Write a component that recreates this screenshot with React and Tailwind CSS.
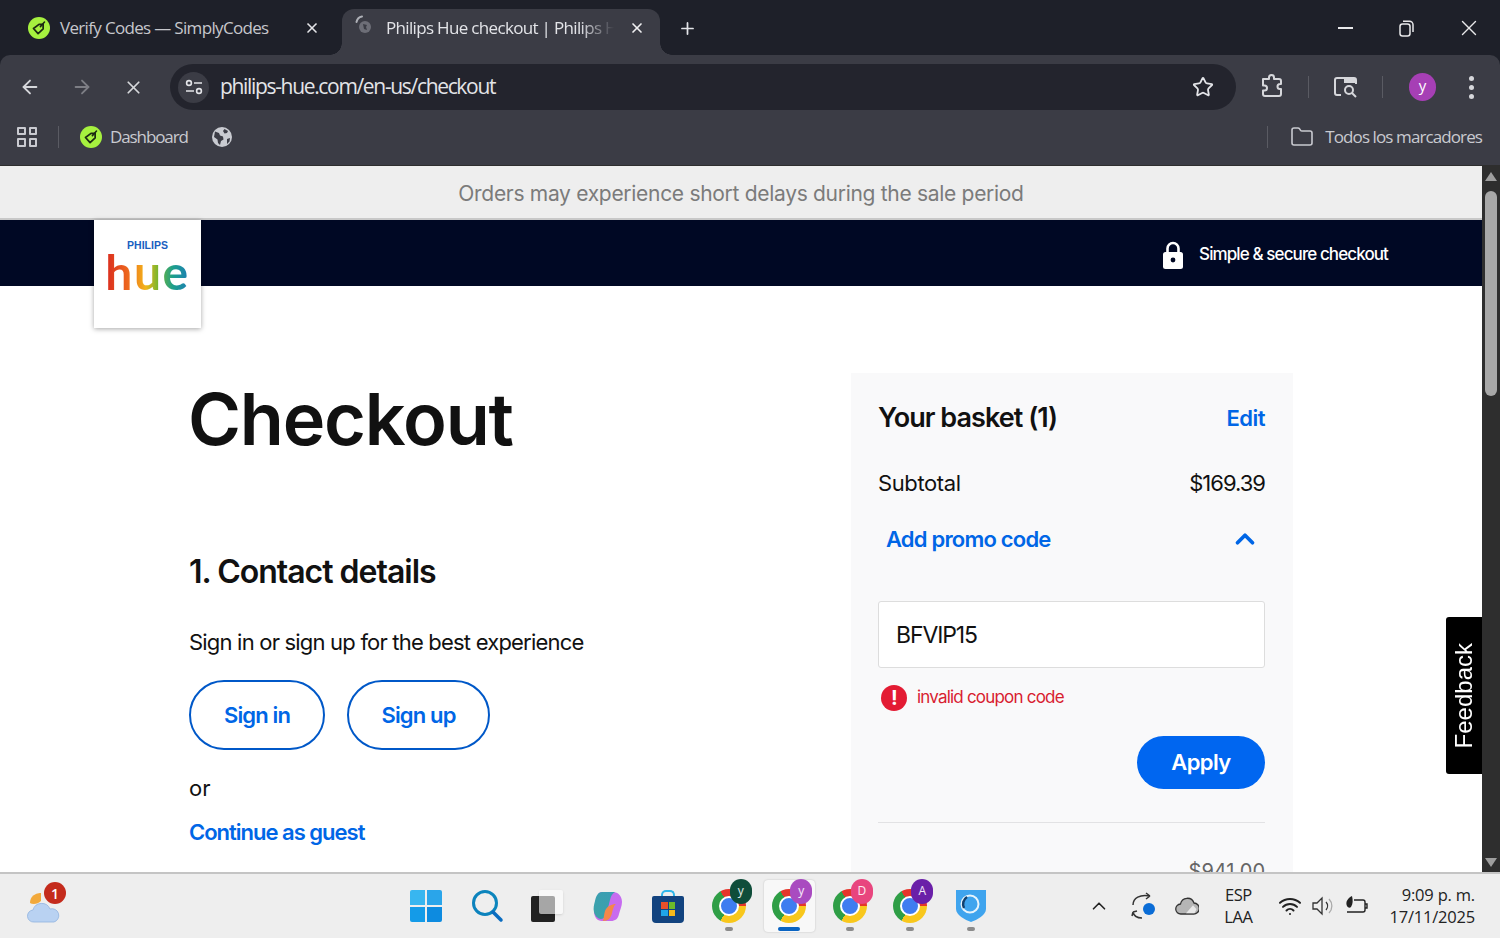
import React from 'react';
import { ArrowLeft, ArrowRight, X, Plus, Star, Folder, ChevronUp, Wifi } from 'lucide-react';

const sans = "font-['Inter','Liberation_Sans',sans-serif]";
const ui = "font-['Open_Sans','Noto_Sans',sans-serif]";

// green price tag favicon of SimplyCodes
const CodesIcon = ({ size = 22 }) => (
  <svg width={size} height={size} viewBox="0 0 24 24" className="shrink-0">
    <circle cx="12" cy="12" r="12" fill="#a6f13f" />
    <path d="M6 12.500l6-4.500h4.500v5L11 18.200 6 12.500z" fill="none" stroke="#1c2a12" strokeWidth="1.900" strokeLinejoin="round" />
    <path d="M13.500 10.500L18 5.500" stroke="#1c2a12" strokeWidth="1.700" strokeLinecap="round" />
  </svg>
);

const Globe = () => (
  <svg width="20" height="20" viewBox="0 0 20 20">
    <circle cx="10" cy="10" r="10" fill="#c9cbd1" />
    <path d="M3 4.500l4 1.500 1 2.500 3 1 .5 3-2.500 1.500-1 4-2-2-.5-3.500L2 10zM12.500 2l3.500 2-1 2-2.500.5-1.500-2.500zM15 12l3-1-.5 3.500L15 17z" fill="#3b3c45" />
  </svg>
);

const TuneIcon = () => (
  <svg width="18" height="16" viewBox="0 0 18 16" fill="none" stroke="#e3e4e8" strokeWidth="1.600">
    <circle cx="4" cy="4" r="2.400" />
    <path d="M9 4h8M1 12h8" />
    <circle cx="14" cy="12" r="2.400" />
  </svg>
);

const ExtensionIcon = () => (
  <svg width="24" height="26" viewBox="0 0 24 26" fill="none" stroke="#d6d7db" strokeWidth="2" strokeLinejoin="round">
    <path d="M3 6h6V4.500a2.500 2.500 0 0 1 5 0V6h5a2 2 0 0 1 2 2v3h-1a2.500 2.500 0 0 0 0 5h1v5a2 2 0 0 1-2 2H5a2 2 0 0 1-2-2v-3.500h1.500a2.500 2.500 0 0 0 0-5H3z" />
  </svg>
);

const TabSearchIcon = () => (
  <svg width="26" height="24" viewBox="0 0 26 24" fill="none" stroke="#d6d7db" strokeWidth="2">
    <path d="M8 20H4a2 2 0 0 1-2-2V5a2 2 0 0 1 2-2h17a2 2 0 0 1 2 2v4" />
    <path d="M11 3h12v5H11z" fill="#d6d7db" stroke="none" />
    <circle cx="16" cy="15" r="4" />
    <path d="M19 18l4 4" />
  </svg>
);

const RestoreIcon = () => (
  <svg width="15" height="17" viewBox="0 0 15 17" fill="none" stroke="#e8e8ea" strokeWidth="1.500">
    <rect x="1" y="4" width="10" height="12" rx="2.500" />
    <path d="M4 1.200h6.500a3.500 3.500 0 0 1 3.500 3.500V12" />
  </svg>
);

const Spinner = () => (
  <svg width="20" height="20" viewBox="0 0 20 20" className="shrink-0 -mt-[6px] -ml-[8px]">
    <circle cx="11" cy="12" r="6" fill="#6d6e77" />
    <path d="M2.500 7A7 7 0 0 1 8 1.500" fill="none" stroke="#aeb0b6" strokeWidth="2" strokeLinecap="round" />
    <path d="M9 9l4 1-1 2 1 3-3-1z" fill="#3b3c45" />
  </svg>
);

const Chrome = ({ letter, badge }) => (
  <span className="relative flex w-[34px] h-[34px] items-center justify-center rounded-full bg-[conic-gradient(from_-30deg,#e5352b_0_120deg,#f8c71c_120deg_240deg,#2f9e46_240deg_360deg)]">
    <span className="w-[16px] h-[16px] rounded-full bg-[#3f7df0] border-[2px] border-white box-content" />
    {letter && (
      <span className={`absolute -top-[10px] -right-[6px] w-[22px] h-[25px] rounded-full flex items-center justify-center text-[12px] text-white/90 ${ui} ${badge}`}>
        {letter}
      </span>
    )}
  </span>
);

const Dot = ({ className = 'w-[8px] bg-[#8b8b8b]' }) => <span className={`block h-[4px] rounded-full mt-[5px] ${className}`} />;

const WinLogo = () => (
  <span className="grid grid-cols-2 gap-[2px] w-[32px] h-[32px]">
    <span className="bg-[#38b6f0] rounded-tl-[2px]" />
    <span className="bg-[#2aa5ea] rounded-tr-[2px]" />
    <span className="bg-[#149be8] rounded-bl-[2px]" />
    <span className="bg-[#0d8be0] rounded-br-[2px]" />
  </span>
);

const SearchIcon = () => (
  <svg width="34" height="34" viewBox="0 0 34 34" fill="none">
    <circle cx="15" cy="14" r="11.500" stroke="url(#searchRing)" strokeWidth="3" />
    <path d="M23 23l8 8" stroke="#0a6cc0" strokeWidth="3.500" strokeLinecap="round" />
    <defs>
      <linearGradient id="searchRing" x1="4" y1="20" x2="26" y2="6">
        <stop stopColor="#0a6cc0" />
        <stop offset="0.7" stopColor="#0ea5b8" />
        <stop offset="1" stopColor="#7fe0b0" />
      </linearGradient>
    </defs>
  </svg>
);

const TaskView = () => (
  <span className="relative block w-[32px] h-[32px]">
    <span className="absolute left-0 bottom-0 w-[24px] h-[26px] rounded-[2px] bg-[#222]" />
    <span className="absolute right-0 top-0 w-[24px] h-[24px] rounded-[2px] bg-white/60 shadow-sm" />
  </span>
);

const Copilot = () => (
  <svg width="34" height="34" viewBox="0 0 34 34" fill="none">
    <path d="M10 3h12c5 0 9 4 9 10 0 4-2 8-3 12-1 5-4 7-8 7H11C6 32 3 28 3 22c0-4 2-8 3-12 1-4 2-7 4-7z" fill="url(#copB)" />
    <path d="M11 3c-4 0-6 4-7 9-1 4-2 7-1 11 1 4 4 7 7 7 3 0 5-3 6-7l3-12c1-4 2-6 5-8z" fill="url(#copA)" />
    <path d="M14 22c2-5 7-7 11-7-2 1-3 5-4 9-1 5-4 8-9 8 1-4 1-7 2-10z" fill="#f5874a" />
    <defs>
      <linearGradient id="copA" x1="4" y1="28" x2="20" y2="4">
        <stop stopColor="#e8c31e" />
        <stop offset="0.45" stopColor="#4cc46c" />
        <stop offset="1" stopColor="#2a7cf0" />
      </linearGradient>
      <linearGradient id="copB" x1="30" y1="6" x2="14" y2="30">
        <stop stopColor="#5a9cf0" />
        <stop offset="0.4" stopColor="#c86bf0" />
        <stop offset="1" stopColor="#f0647e" />
      </linearGradient>
    </defs>
  </svg>
);

const Store = () => (
  <span className="relative block w-[32px] h-[33px] mt-[1px]">
    <span className="absolute left-[9px] top-0 w-[14px] h-[10px] rounded-t-[5px] border-[2px] border-b-0 border-[#2fb6ea]" />
    <span className="absolute inset-x-0 bottom-0 h-[27px] rounded-b-[4px] rounded-t-[2px] bg-[#12437f] flex items-center justify-center">
      <span className="grid grid-cols-2 gap-[1px] w-[14px] h-[14px]">
        <span className="bg-[#e8502a]" />
        <span className="bg-[#6cbb2a]" />
        <span className="bg-[#1fa5e8]" />
        <span className="bg-[#f5b81a]" />
      </span>
    </span>
  </span>
);

const Shield = () => (
  <svg width="32" height="34" viewBox="0 0 32 34">
    <path d="M1 1h30v19c0 6-9 11-15 13C10 31 1 26 1 20z" fill="#3fa4ee" />
    <circle cx="15" cy="15" r="8.500" fill="none" stroke="#e8f4fc" strokeWidth="2" />
    <path d="M9 19a8.500 8.500 0 0 1 3-11" fill="none" stroke="#12406e" strokeWidth="2.500" />
  </svg>
);

const Weather = () => (
  <span className="relative block w-[36px] h-[38px]">
    <svg width="34" height="38" viewBox="0 0 34 38" className="absolute left-0 top-0">
      <path d="M14 6a10 10 0 0 0-11 10c3 2 8 1 11-2z" fill="#f2a93b" />
      <path d="M7 35a6 6 0 0 1-1-12 9 9 0 0 1 17-1 6.500 6.500 0 0 1 4 13z" fill="#b9d2f2" stroke="#8fb2e0" strokeWidth="0.800" />
    </svg>
    <span className={`absolute -right-[3px] -top-[5px] w-[22px] h-[22px] rounded-full bg-[#c42b1c] text-white text-[14px] font-semibold flex items-center justify-center ${ui}`}>1</span>
  </span>
);

const SyncIcon = () => (
  <span className="relative block w-[24px] h-[28px]">
    <svg width="24" height="28" viewBox="0 0 24 28" fill="none" stroke="#333" strokeWidth="1.500">
      <path d="M2 13C2 6 9 2 19 4M19 4l-4-3M19 4l-4 3M2 20c1 5 5 6 9 6M2 20l4-1M2 20l-1 4" />
    </svg>
    <span className="absolute right-[0px] bottom-[5px] w-[12px] h-[12px] rounded-full bg-[#0a6cd6]" />
  </span>
);

const CloudIcon = () => (
  <svg width="24" height="18" viewBox="0 0 24 18">
    <path d="M6 17a5 5 0 0 1-.500-10A7 7 0 0 1 19 6a5.500 5.500 0 0 1-.500 11z" fill="#b5b5b5" stroke="#333" strokeWidth="1.300" />
    <path d="M11 16.300l7-8 3.500 4-2 4z" fill="#e8e8e8" />
  </svg>
);

const SpeakerIcon = () => (
  <svg width="22" height="20" viewBox="0 0 22 20" fill="none" stroke="#333" strokeWidth="1.300">
    <path d="M1 7h4l5-5v16l-5-5H1z" />
    <path d="M14 6a6 6 0 0 1 0 8" />
    <path d="M17 3a10 10 0 0 1 0 14" stroke="#aaa" />
  </svg>
);

const BatteryIcon = () => (
  <svg width="24" height="22" viewBox="0 0 24 22" fill="none" stroke="#222" strokeWidth="1.400">
    <path d="M10 5h9a2 2 0 0 1 2 2v8a2 2 0 0 1-2 2H3" />
    <path d="M21 9h2v4h-2" />
    <path d="M8 1c-4 2-7 6-5 10 1 2 3 2 4 1 2-3 2-7 1-11z" fill="#222" stroke="none" />
  </svg>
);

const ChromeFrame = () => (
  <div className={`shrink-0 bg-[#1e2029] ${ui}`}>
    {/* Tab strip */}
    <div className="h-[55px] flex items-end text-[17px] tracking-[-0.67px]">
      <div className="w-[342px] h-[46px] flex items-center pl-[28px] pb-[9px] text-[#c6c7cc]">
        <CodesIcon />
        <span className="ml-[10px] w-[244px] whitespace-nowrap">Verify Codes — SimplyCodes</span>
        <X size={16} strokeWidth={2.500} className="text-[#e5e5e8]" />
      </div>
      <div className="relative w-[318px] h-[46px] rounded-t-[12px] bg-[#3b3c45] flex items-center pl-[20px] pb-[9px] text-[#e3e4e8]">
        <span className="absolute -left-[12px] bottom-0 w-[12px] h-[12px] bg-[radial-gradient(circle_at_0_0,#1e2029_11.500px,#3b3c45_12px)]" />
        <span className="absolute -right-[12px] bottom-0 w-[12px] h-[12px] bg-[radial-gradient(circle_at_100%_0,#1e2029_11.500px,#3b3c45_12px)]" />
        <Spinner />
        <span className="ml-[12px] w-[228px] overflow-hidden whitespace-nowrap [mask-image:linear-gradient(90deg,#000_85%,transparent)]">Philips Hue checkout | Philips Hue</span>
        <X size={16} strokeWidth={2.500} className="ml-[15px] text-[#f0f0f2]" />
      </div>
      <div className="ml-[18px] pb-[17px] text-[#e3e4e8]">
        <Plus size={19} strokeWidth={2.200} />
      </div>
      <div className="ml-auto flex items-center pb-[14px] text-[#e8e8ea]">
        <span className="block w-[15px] h-[1.500px] bg-[#e8e8ea]" />
        <span className="ml-[46px] block"><RestoreIcon /></span>
        <X size={26} strokeWidth={1.300} className="ml-[42px] mr-[18px]" />
      </div>
    </div>
    {/* Toolbar */}
    <div className="h-[55px] bg-[#3b3c45] rounded-t-[10px] flex items-center pt-[9px] text-[#d6d7db]">
      <ArrowLeft size={22} strokeWidth={2} className="ml-[19px]" />
      <ArrowRight size={22} strokeWidth={2} className="ml-[30px] text-[#7d7e85]" />
      <X size={21} strokeWidth={2} className="ml-[30px]" />
      <div className="ml-[26px] w-[1066px] h-[46px] rounded-full bg-[#23242d] flex items-center pl-[8px] pr-[22px]">
        <span className="w-[31px] h-[31px] rounded-full bg-[#3b3c45] flex items-center justify-center"><TuneIcon /></span>
        <span className="ml-[11px] text-[21px] text-[#e3e4e8] tracking-[-1.330px]">philips-hue.com/en-us/checkout</span>
        <Star size={22} strokeWidth={2} className="ml-auto text-[#e3e4e8]" />
      </div>
      <span className="ml-[24px] -mt-[2px]"><ExtensionIcon /></span>
      <span className="ml-[24px] w-px h-[22px] bg-[#5a5b63]" />
      <span className="ml-[24px]"><TabSearchIcon /></span>
      <span className="ml-[23px] w-px h-[22px] bg-[#5a5b63]" />
      <span className="ml-[26px] w-[27px] h-[28px] rounded-full bg-[#a63fb5] text-white text-[15px] flex items-center justify-center pb-[3px]">y</span>
      <span className="ml-[33px] flex flex-col gap-[4px]">
        <span className="w-[5px] h-[5px] rounded-full bg-[#d6d7db]" />
        <span className="w-[5px] h-[5px] rounded-full bg-[#d6d7db]" />
        <span className="w-[5px] h-[5px] rounded-full bg-[#d6d7db]" />
      </span>
    </div>
    {/* Bookmarks bar */}
    <div className="h-[55px] pb-[2px] bg-[#3b3c45] flex items-center text-[#c9cad0] text-[17px] tracking-[-1.100px]">
      <span className="ml-[17px] grid grid-cols-2 gap-[3px] w-[20px] h-[20px]">
        {[0, 1, 2, 3].map((i) => <span key={i} className="border-[2px] border-[#c9cad0] rounded-[1px]" />)}
      </span>
      <span className="ml-[21px] w-px h-[22px] bg-[#5a5b63]" />
      <span className="ml-[21px]"><CodesIcon /></span>
      <span className="ml-[8px]">Dashboard</span>
      <span className="ml-[24px]"><Globe /></span>
      <span className="ml-auto w-px h-[22px] bg-[#5a5b63]" />
      <Folder size={24} strokeWidth={1.600} className="ml-[22px]" />
      <span className="ml-[11px] mr-[18px] tracking-[-0.900px]">Todos los marcadores</span>
    </div>
  </div>
);

const Page = () => (
  <div className={`relative flex-1 min-w-0 overflow-hidden bg-white ${sans}`}>
    <div className="h-[54px] pt-[4px] bg-[#eeeeee] border-b-[2px] border-[#c8c8c8] flex items-center justify-center text-[21px] text-[#7b7b7b] tracking-[-0.300px]">
      Orders may experience short delays during the sale period
    </div>
    <div className="h-[66px] pt-[3px] bg-[#000824] flex items-center justify-end pr-[94px] text-white">
      <svg width="22" height="28" viewBox="0 0 22 28" className="mr-[15px]">
        <path d="M5.500 12V7.500a5.500 5.500 0 0 1 11 0V12" fill="none" stroke="#fff" strokeWidth="2.600" />
        <rect x="1" y="11" width="20" height="17" rx="2.500" fill="#fff" />
        <circle cx="11" cy="19" r="2.400" fill="#000824" />
      </svg>
      <span className="text-[17px] font-medium tracking-[-0.900px]">Simple &amp; secure checkout</span>
    </div>
    {/* Logo card sits over the navy bar */}
    <div className="absolute left-[94px] top-[54px] w-[107px] h-[108px] bg-white shadow-[0_1px_5px_rgba(0,0,0,0.35)] flex flex-col items-center pt-[19px]">
      <span className="text-[10.500px] font-bold text-[#1a5fc0] leading-[13px] font-['Liberation_Sans']">PHILIPS</span>
      <span className="mt-[1px] text-[48px] leading-[38px] font-bold tracking-[1.500px] font-['Lato'] text-transparent bg-clip-text bg-[linear-gradient(90deg,#d9281f,#ee6a1e_28%,#f3b61a_48%,#7ab62f_62%,#1d9f8c_80%,#1c7cb8)]">hue</span>
    </div>

    <div className="flex pl-[189px] pt-[87px]">
      <div className="w-[662px] shrink-0">
        <h1 className="text-[72px] leading-[92px] -ml-[1px] font-semibold tracking-[-1.200px] text-[#111]">Checkout</h1>
        <h2 className="mt-[86px] text-[32px] leading-[42px] font-semibold tracking-[-1px] text-[#111]">1. Contact details</h2>
        <p className="mt-[31px] text-[22px] leading-[36px] tracking-[-0.800px] text-[#111]">Sign in or sign up for the best experience</p>
        <div className="mt-[20px] flex gap-[22px] text-[22px] font-semibold tracking-[-0.850px] text-[#0066e6]">
          <button className="w-[136px] h-[70px] rounded-full border-[2px] border-[#0058c8]">Sign in</button>
          <button className="w-[143px] h-[70px] rounded-full border-[2px] border-[#0058c8]">Sign up</button>
        </div>
        <p className="mt-[23px] text-[22px] leading-[30px] text-[#111]">or</p>
        <a className="block mt-[14px] text-[22px] leading-[30px] font-semibold tracking-[-1px] text-[#0066e6]">Continue as guest</a>
      </div>

      <aside className="w-[442px] shrink-0 h-[560px] bg-[#f9f9fa] pl-[27px] pr-[28px] pt-[27px] text-[#111]">
        <div className="flex items-center justify-between h-[36px]">
          <h3 className="text-[27px] font-semibold tracking-[-0.950px] pt-[1px]">Your basket (1)</h3>
          <a className="text-[22px] font-semibold tracking-[-0.500px] text-[#0066e6]">Edit</a>
        </div>
        <div className="mt-[31px] flex items-center justify-between h-[32px] text-[22px] tracking-[-0.400px]">
          <span>Subtotal</span>
          <span className="tracking-[-1px]">$169.39</span>
        </div>
        <div className="mt-[24px] flex items-center justify-between h-[32px] pl-[8px] pr-[5px] text-[#0066e6]">
          <span className="text-[22px] font-semibold tracking-[-0.800px]">Add promo code</span>
          <ChevronUp size={30} strokeWidth={3} />
        </div>
        <div className="mt-[46px] h-[67px] bg-white border border-[#dddddd] rounded-[3px] flex items-center pl-[17px] pt-[2px] text-[23px] tracking-[-1.100px]">BFVIP15</div>
        <div className="mt-[17px] flex items-center pl-[3px] h-[26px] text-[17px] tracking-[-0.800px] text-[#d8202f]">
          <span className="w-[26px] h-[26px] rounded-full bg-[#e31b33] text-white text-[20px] font-bold flex items-center justify-center">!</span>
          <span className="ml-[10px]">invalid coupon code</span>
        </div>
        <div className="mt-[25px] flex justify-end">
          <button className="w-[128px] h-[53px] rounded-full bg-[#0066f0] text-white text-[22px] font-semibold tracking-[-0.600px]">Apply</button>
        </div>
        <div className="mt-[33px] border-t border-[#e2e2e4]" />
        <div className="mt-[33px] text-right text-[20px] text-[#666]">$941.00</div>
      </aside>
    </div>

    <div className="absolute right-0 top-[451px] w-[36px] h-[157px] bg-black rounded-l-[3px] flex items-center justify-center">
      <span className="[writing-mode:vertical-rl] rotate-180 text-white text-[24px] font-['Liberation_Sans'] whitespace-nowrap">Feedback</span>
    </div>
  </div>
);

const Scrollbar = () => (
  <div className="w-[18px] shrink-0 bg-[#2e2e2e] flex flex-col items-center">
    <span className="mt-[6px] w-0 h-0 border-x-[6px] border-x-transparent border-b-[9px] border-b-[#9e9e9e]" />
    <span className="mt-[10px] w-[12px] h-[205px] rounded-full bg-[#a8a8a8]" />
    <span className="mt-auto mb-[5px] w-0 h-0 border-x-[6px] border-x-transparent border-t-[9px] border-t-[#9e9e9e]" />
  </div>
);

const Taskbar = () => {
  const apps = [
    { el: <WinLogo /> },
    { el: <SearchIcon /> },
    { el: <TaskView /> },
    { el: <Copilot /> },
    { el: <Store /> },
    { el: <Chrome letter="y" badge="bg-[#0f4d3a]" />, dot: true },
    { el: <Chrome letter="y" badge="bg-[#a94bc0]" />, active: true },
    { el: <Chrome letter="D" badge="bg-[#e8457e]" />, dot: true },
    { el: <Chrome letter="A" badge="bg-[#6a1fa8]" />, dot: true },
    { el: <Shield />, dot: true },
  ];
  return (
    <div className={`h-[66px] shrink-0 bg-[#eeeeee] border-t-[2px] border-[#c4c4c4] flex items-center text-[#222] ${ui}`}>
      <span className="ml-[27px]"><Weather /></span>
      <div className="ml-[333px] flex">
        {apps.map((app, i) => (
          <div key={i} className="w-[60.500px] flex justify-center">
            <div className={`w-[51px] h-[52px] flex flex-col items-center pt-[9px] rounded-[4px] ${app.active ? 'bg-[#f8f8f8] shadow-[0_0_2px_rgba(0,0,0,0.2)]' : ''}`}>
              <span className="h-[33px] flex items-center">{app.el}</span>
              {app.dot && <Dot />}
              {app.active && <Dot className="w-[22px] bg-[#0a64c2]" />}
            </div>
          </div>
        ))}
      </div>
      <div className="ml-auto flex items-center">
        <ChevronUp size={22} strokeWidth={1.800} />
        <span className="ml-[21px]"><SyncIcon /></span>
        <span className="ml-[20px]"><CloudIcon /></span>
        <span className="ml-[22px] w-[34px] text-center text-[16.500px] leading-[22px] tracking-[-0.400px]">ESP<br />LAA</span>
        <Wifi size={24} strokeWidth={2} className="ml-[23px]" />
        <span className="ml-[10px]"><SpeakerIcon /></span>
        <span className="ml-[10px]"><BatteryIcon /></span>
        <span className="ml-[21px] mr-[25px] text-right text-[16.500px] leading-[22px] tracking-[-0.200px]">9:09 p. m.<br />17/11/2025</span>
      </div>
    </div>
  );
};

export default function App() {
  return (
    <div className="w-[1500px] h-[938px] flex flex-col overflow-hidden">
      <ChromeFrame />
      <div className="flex-1 min-h-0 flex pt-px bg-[#2e2e2e]">
        <Page />
        <Scrollbar />
      </div>
      <Taskbar />
    </div>
  );
}
